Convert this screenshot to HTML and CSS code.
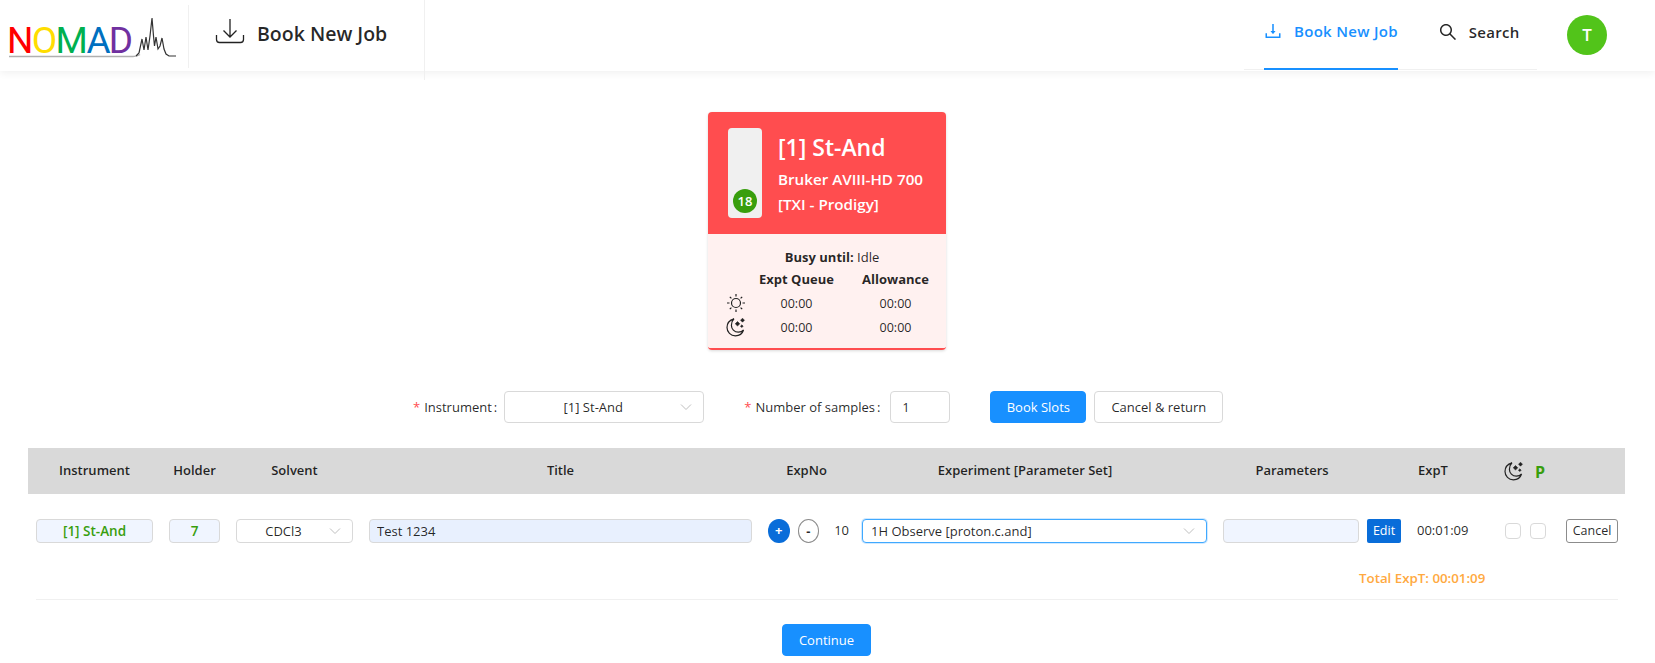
FILE: index.html
```html
<!DOCTYPE html>
<html lang="en">
<head>
    <meta charset="UTF-8">
    <title>NOMAD - Book New Job</title>
    <link rel="stylesheet" href="styles.css">
</head>
<body>
    <header class="topbar">
        <div class="logo">
            <span class="logo-text"><span class="c-red">N</span><span class="c-yellow">O</span><span class="c-green">M</span><span class="c-blue">A</span><span class="c-purple">D</span></span>
            <svg class="logo-trace" width="176" height="50" viewBox="0 0 176 50">
                <path d="M9 40.500H133c3 0 5-.5 7-2" fill="none" stroke="#b0b0b0" stroke-width="1.500"/>
                <path d="M136 40l3-3 3-14 2 11 2-13 2 13 2-14 2-18 1.500 18 1 10 1.500-9 2 12 2-3 2-8 2 11 2 5 3 2h7" fill="none" stroke="#333" stroke-width="1.200"/>
            </svg>
        </div>
        <div class="page-title">
            <svg class="title-icon" width="30" height="28" viewBox="0 0 30 28" fill="none" stroke="#222" stroke-width="1.300">
                <path d="M15 2v18M8.500 13.500l6.500 6.500 6.500-6.500"/>
                <path d="M1.500 18v4.500c0 1.500 1 3 3 3h21c2 0 3-1.500 3-3V18"/>
            </svg>
            <span>Book New Job</span>
        </div>
        <nav class="menu">
            <a class="menu-item active">
                <svg width="18" height="18" viewBox="64 64 896 896" fill="currentColor"><path d="M505.700 661a8 8 0 0 0 12.600 0l112-141.700c4.100-5.200.4-12.900-6.300-12.900h-74.100V168c0-4.400-3.600-8-8-8h-60c-4.400 0-8 3.600-8 8v338.300H400c-6.700 0-10.400 7.700-6.300 12.900l112 141.700zM878 626h-60c-4.400 0-8 3.600-8 8v154H214V634c0-4.400-3.600-8-8-8h-60c-4.400 0-8 3.600-8 8v198c0 17.700 14.300 32 32 32h684c17.700 0 32-14.300 32-32V634c0-4.400-3.600-8-8-8z"/></svg>
                Book New Job
            </a>
            <a class="menu-item">
                <svg width="18" height="18" viewBox="64 64 896 896" fill="currentColor"><path d="M909.600 854.500L649.900 594.800C690.200 542.700 712 479 712 412c0-80.200-31.300-155.400-87.900-212.100-56.600-56.700-132-87.900-212.100-87.900s-155.500 31.300-212.100 87.900C143.200 256.500 112 331.800 112 412c0 80.100 31.300 155.500 87.900 212.100C256.500 680.800 331.800 712 412 712c67 0 130.600-21.800 182.700-62l259.700 259.600a8.200 8.200 0 0 0 11.600 0l43.600-43.500a8.200 8.200 0 0 0 0-11.600zM570.400 570.400C528 612.700 471.800 636 412 636s-116-23.300-158.400-65.600C211.300 528 188 471.800 188 412s23.300-116.100 65.600-158.400C296 211.300 352.200 188 412 188s116.100 23.200 158.400 65.600S636 352.200 636 412s-23.300 116.100-65.600 158.400z"/></svg>
                Search
            </a>
        </nav>
        <div class="avatar">T</div>
    </header>

    <main>
        <section class="card">
            <div class="card-top">
                <div class="tube"><span class="tube-count">18</span></div>
                <div class="card-name">
                    <h2>[1] St-And</h2>
                    <p>Bruker AVIII-HD 700</p>
                    <p>[TXI - Prodigy]</p>
                </div>
            </div>
            <div class="card-body">
                <div class="busy"><b>Busy until:</b> Idle</div>
                <div class="queue-grid">
                    <span></span><b>Expt Queue</b><b>Allowance</b>
                    <svg class="icon-sun" width="20" height="20" viewBox="0 0 20 20" fill="none" stroke="#222" stroke-width="1.200">
                        <circle cx="10" cy="10" r="4.500"/>
                        <path d="M10 1v2.500M10 16.500V19M1 10h2.500M16.500 10H19M3.800 3.800l1.600 1.600M14.600 14.600l1.600 1.600M3.800 16.200l1.600-1.600M14.600 5.400l1.600-1.600"/>
                    </svg>
                    <span>00:00</span><span>00:00</span>
                    <svg class="icon-moon" width="20" height="20" viewBox="0 0 20 20" fill="none" stroke="#222" stroke-width="1.200">
                        <path d="M8 1.800C3.700 3 1 6.600 1 10.600c0 4.600 3.700 8.200 8.400 8.200 3.800 0 7-2.300 8.200-5.800-1.200 1.400-3.200 2.200-5.200 2.200-4.100 0-7-3.100-7-6.900 0-2.800 1-5 2.600-6.500z"/>
                        <path d="M11.500 4.500l2.300 2.300-2.300 2.300-2.300-2.300zM16.500 1.200l2 2-2 2-2-2zM15.800 7.800l1.400 1.400-1.400 1.400-1.400-1.400z" fill="#222" stroke-width=".5"/>
                    </svg>
                    <span>00:00</span><span>00:00</span>
                </div>
            </div>
        </section>

        <form class="book-form">
            <label class="req">Instrument<span class="colon">:</span></label>
            <div class="select select-instrument">
                <span>[1] St-And</span>
                <svg class="chev" width="12" height="8" viewBox="0 0 12 8"><path d="M1 1.500l5 5 5-5" fill="none" stroke="#bfbfbf"/></svg>
            </div>
            <label class="req label-samples">Number of samples<span class="colon">:</span></label>
            <input class="num-input" type="text" value="1">
            <button type="button" class="btn btn-primary btn-book">Book Slots</button>
            <button type="button" class="btn btn-return">Cancel &amp; return</button>
        </form>

        <div class="table-head">
            <span class="th-instrument">Instrument</span>
            <span class="th-holder">Holder</span>
            <span class="th-solvent">Solvent</span>
            <span class="th-title">Title</span>
            <span class="th-expno">ExpNo</span>
            <span class="th-experiment">Experiment [Parameter Set]</span>
            <span class="th-params">Parameters</span>
            <span class="th-expt">ExpT</span>
            <svg class="th-moon" width="20" height="20" viewBox="0 0 20 20" fill="none" stroke="#222" stroke-width="1.200">
                <path d="M8 1.800C3.700 3 1 6.600 1 10.600c0 4.600 3.700 8.200 8.400 8.200 3.800 0 7-2.300 8.200-5.800-1.200 1.400-3.200 2.200-5.200 2.200-4.100 0-7-3.100-7-6.900 0-2.800 1-5 2.600-6.500z"/>
                <path d="M11.500 4.500l2.300 2.300-2.300 2.300-2.300-2.300zM16.500 1.200l2 2-2 2-2-2zM15.800 7.800l1.400 1.400-1.400 1.400-1.400-1.400z" fill="#222" stroke-width=".5"/>
            </svg>
            <span class="th-p">P</span>
        </div>

        <div class="table-row">
            <div class="cell-tag tag-instrument">[1] St-And</div>
            <div class="cell-tag tag-holder">7</div>
            <div class="select select-solvent">
                <span>CDCl3</span>
                <svg class="chev" width="12" height="8" viewBox="0 0 12 8"><path d="M1 1.500l5 5 5-5" fill="none" stroke="#bfbfbf"/></svg>
            </div>
            <input class="title-input" type="text" value="Test 1234">
            <div class="expno">
                <span class="round round-add">+</span>
                <span class="round round-remove">-</span>
                <span class="expno-val">10</span>
            </div>
            <div class="select select-exp">
                <span>1H Observe [proton.c.and]</span>
                <svg class="chev" width="12" height="8" viewBox="0 0 12 8"><path d="M1 1.500l5 5 5-5" fill="none" stroke="#bfbfbf"/></svg>
            </div>
            <div class="params-field"></div>
            <span class="btn-edit">Edit</span>
            <span class="expt-val">00:01:09</span>
            <span class="check check-first"></span>
            <span class="check check-second"></span>
            <span class="btn-cancel">Cancel</span>
        </div>

        <div class="total">Total ExpT: 00:01:09</div>
        <hr class="divider">
        <div class="actions">
            <button type="button" class="btn btn-primary btn-continue">Continue</button>
        </div>
    </main>
</body>
</html>
```

FILE: styles.css
```css
* {
    box-sizing: border-box;
}
body {
    margin: 0;
    background-color: #fff;
    color: rgba(0, 0, 0, 0.85);
    font-family: "Open Sans", "Noto Sans", sans-serif;
    font-size: 13px;
    height: 663px;
    overflow: hidden;
}

/* top bar */
.topbar {
    display: flex;
    height: 71px;
    background-color: #fff;
    box-shadow: 0 2px 8px #f0f0f0;
    position: relative;
}
.logo {
    position: relative;
    width: 189px;
    height: 63px;
    margin-top: 5px;
    border-right: 1px solid #f0f0f0;
    padding-left: 7px;
    flex-shrink: 0;
}
.logo-text {
    font-family: Roboto, sans-serif;
    font-size: 37px;
    letter-spacing: -1.700px;
    line-height: 63px;
    display: block;
    margin-top: 4px;
}
.c-red { color: #ff0000; }
.c-yellow { color: #ffdd00; }
.c-green { color: #00b050; }
.c-blue { color: #0070c0; }
.c-purple { color: #7030a0; }
.logo-trace {
    position: absolute;
    left: 0;
    top: 11px;
}
.page-title {
    display: flex;
    align-items: center;
    gap: 12px;
    width: 236px;
    height: 80px;
    padding: 0 0 14px 26px;
    border-right: 1px solid #f0f0f0;
    font-size: 19.500px;
    font-weight: 600;
    flex-shrink: 0;
}
.title-icon {
    margin-top: -4px;
}
.menu {
    display: flex;
    margin-left: auto;
    width: 293px;
    height: 70px;
    border-bottom: 1px solid #f0f0f0;
    padding-left: 20px;
    gap: 41px;
}
.menu-item {
    display: flex;
    align-items: center;
    gap: 12px;
    height: 70px;
    padding-bottom: 6px;
    font-size: 15px;
    font-weight: 600;
    letter-spacing: 0.300px;
    color: rgba(0, 0, 0, 0.85);
}
.menu-item.active {
    color: #1890ff;
    border-bottom: 2px solid #1890ff;
}
.avatar {
    width: 40px;
    height: 40px;
    margin: 15px 48px 0 30px;
    border-radius: 50%;
    background-color: #52c41a;
    color: #fff;
    font-size: 17px;
    font-weight: 600;
    line-height: 40px;
    text-align: center;
}

/* instrument card */
.card {
    width: 238px;
    margin: 41px 0 0 708px;
    border-radius: 4px;
    border-bottom: 2px solid #ff4d4f;
    overflow: hidden;
    box-shadow: 0 1px 3px rgba(0, 0, 0, 0.15);
}
.card-top {
    display: flex;
    height: 122px;
    padding: 16px 0 0 20px;
    background-color: #ff4d4f;
    color: #fff;
}
.tube {
    position: relative;
    width: 34px;
    height: 90px;
    border-radius: 4px;
    background-color: #f0f0f0;
}
.tube-count {
    position: absolute;
    left: 5px;
    bottom: 5px;
    width: 24px;
    height: 24px;
    border-radius: 50%;
    background-color: #389e0d;
    color: #fff;
    font-size: 13px;
    font-weight: 600;
    line-height: 24px;
    text-align: center;
}
.card-name {
    margin-left: 16px;
}
.card-name h2 {
    margin: 4px 0 5px;
    font-size: 23px;
    font-weight: 600;
    line-height: 30px;
}
.card-name p {
    margin: 0;
    font-size: 15.200px;
    font-weight: 600;
    line-height: 25px;
}
.card-body {
    height: 114px;
    padding-top: 12px;
    background-color: #fff1f0;
    text-align: center;
    font-size: 12.500px;
}
.busy {
    font-size: 13px;
    line-height: 22px;
    padding-left: 10px;
}
.queue-grid {
    display: grid;
    grid-template-columns: 36px 99px 99px;
    grid-auto-rows: 24px;
    padding-left: 3px;
    margin-top: -1px;
    align-items: center;
}
.queue-grid b {
    font-size: 13px;
}
.queue-grid svg {
    margin-left: 15px;
}

/* booking form */
.book-form {
    display: flex;
    align-items: center;
    height: 32px;
    margin-top: 41px;
    padding-left: 413px;
}
.req::before {
    content: "*";
    color: #ff4d4f;
    margin-right: 4px;
}
.colon {
    margin: 0 7px 0 2px;
}
.label-samples {
    margin-left: 40px;
}
.select {
    position: relative;
    display: flex;
    align-items: center;
    justify-content: center;
    border: 1px solid #d9d9d9;
    border-radius: 4px;
    background-color: #fff;
    padding-right: 22px;
}
.chev {
    position: absolute;
    right: 11px;
    top: 50%;
    margin-top: -4px;
}
.select-instrument {
    width: 200px;
    height: 32px;
}
.num-input {
    width: 60px;
    height: 32px;
    margin-left: 3px;
    padding: 0 11px;
    border: 1px solid #d9d9d9;
    border-radius: 4px;
    font: inherit;
    color: inherit;
}
.btn {
    height: 32px;
    padding: 0 15px;
    margin-left: 8px;
    border: 1px solid #d9d9d9;
    border-radius: 4px;
    background-color: #fff;
    font: inherit;
    color: inherit;
}
.btn-primary {
    background-color: #1890ff;
    border-color: #1890ff;
    color: #fff;
}
.btn-book {
    width: 96px;
    margin-left: 40px;
    padding: 0;
}
.btn-return {
    width: 129px;
    padding: 0;
}

/* experiment table */
.table-head {
    display: flex;
    align-items: center;
    height: 46px;
    margin: 25px 30px 0 28px;
    padding-bottom: 3px;
    background-color: #d9d9d9;
    font-weight: 600;
    font-size: 13px;
    text-align: center;
}
.th-instrument { width: 133px; }
.th-holder { width: 67px; }
.th-solvent { width: 133px; }
.th-title { width: 399px; }
.th-expno { width: 93px; }
.th-experiment { width: 344px; }
.th-params { width: 136px; margin-left: 27px; }
.th-expt { width: 52px; margin-left: 47px; }
.th-moon { margin-left: 45px; margin-top: 3px; }
.th-p {
    margin-left: 11px;
    color: #389e0d;
    font-size: 16px;
    font-weight: 700;
    line-height: 20px;
    margin-top: 4px;
}
.table-row {
    display: flex;
    gap: 16px;
    height: 24px;
    margin-top: 25px;
    padding-left: 36px;
    align-items: center;
    font-size: 13px;
}
.cell-tag {
    height: 24px;
    border: 1px solid #d9d9d9;
    border-radius: 4px;
    background-color: #f0f5ff;
    color: #389e0d;
    font-size: 13.500px;
    font-weight: 600;
    line-height: 22px;
    text-align: center;
}
.tag-instrument { width: 117px; }
.tag-holder { width: 51px; }
.select-solvent {
    width: 117px;
    height: 24px;
}
.title-input {
    width: 383px;
    height: 24px;
    padding: 0 7px;
    border: 1px solid #d9d9d9;
    border-radius: 4px;
    background-color: #e8f0fe;
    font: inherit;
    color: inherit;
}
.expno {
    display: flex;
    align-items: center;
    width: 81px;
}
.round {
    width: 22px;
    height: 24px;
    border-radius: 50%;
    font-weight: 700;
    line-height: 23px;
    text-align: center;
}
.round-add {
    background-color: #096dd9;
    color: #fff;
}
.round-remove {
    margin-left: 8px;
    border: 1px solid #8c8c8c;
    line-height: 22px;
}
.expno-val {
    margin-left: 15px;
    padding-bottom: 3px;
}
.select-exp {
    width: 345px;
    height: 24px;
    margin-left: -3px;
    border-color: #40a9ff;
    box-shadow: 0 0 0 1px rgba(24, 144, 255, 0.2);
    justify-content: flex-start;
    padding-left: 8px;
}
.params-field {
    width: 136px;
    height: 24px;
    border: 1px solid #d9d9d9;
    border-radius: 4px;
    background-color: #f0f5ff;
}
.btn-edit {
    width: 34px;
    height: 24px;
    margin-left: -8px;
    border-radius: 2px;
    background-color: #096dd9;
    color: #fff;
    font-size: 12.500px;
    line-height: 24px;
    text-align: center;
}
.expt-val {
    width: 51px;
    font-size: 13px;
    white-space: nowrap;
    padding-bottom: 3px;
}
.check {
    width: 16px;
    height: 16px;
    border: 1px solid #d9d9d9;
    border-radius: 4px;
}
.check-first { margin-left: 21px; }
.check-second { margin-left: -7px; }
.btn-cancel {
    width: 52px;
    height: 24px;
    margin-left: 4px;
    border: 1px solid #8c8c8c;
    border-radius: 3px;
    font-size: 12.500px;
    line-height: 22px;
    text-align: center;
}
.total {
    margin: 25px 0 0 1359px;
    color: #ffa940;
    font-weight: 600;
    font-size: 13.300px;
    line-height: 20px;
}
.divider {
    margin: 11px 37px 0 36px;
    border: 0;
    border-top: 1px solid #f0f0f0;
}
.actions {
    display: flex;
    justify-content: center;
    margin: 24px 2px 0 0;
}
.btn-continue {
    width: 89px;
    margin: 0;
    padding: 0;
}
```
